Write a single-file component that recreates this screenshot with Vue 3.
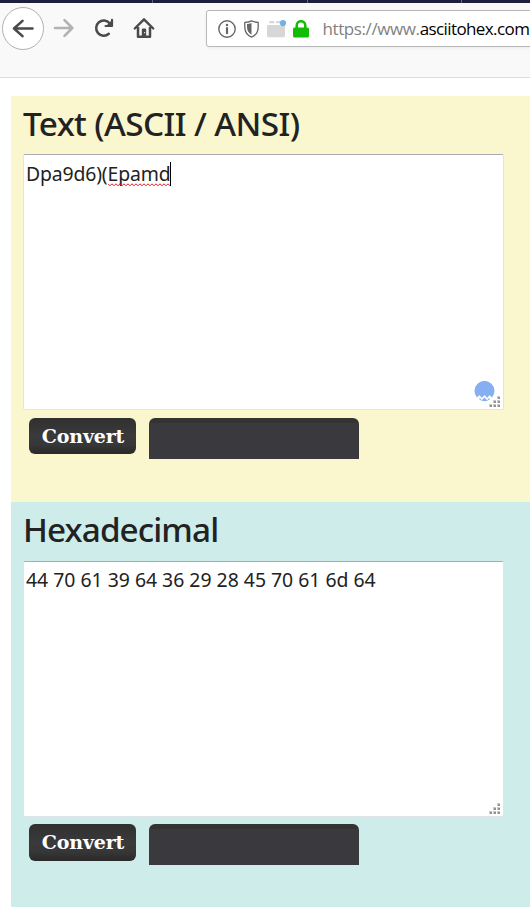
<script setup>
const panels = [
  { id: 'text', title: 'Text (ASCII / ANSI)', plain: 'Dpa9d6)(', marked: 'Epamd', caret: true },
  { id: 'hex', title: 'Hexadecimal', plain: '44 70 61 39 64 36 29 28 45 70 61 6d 64', marked: '', caret: false }
]
const tabs = [0, 1, 2, 3]
const dots = [[8, 0], [4, 4], [8, 4], [0, 8], [4, 8], [8, 8]]
</script>

<template>
  <div class="window">
    <div class="tabs"><i v-for="t in tabs" :key="t"></i></div>
    <header class="toolbar">
      <button class="back" aria-label="Back">
        <svg width="42" height="44" viewBox="0 0 42 44"><ellipse cx="21" cy="21.5" rx="20.5" ry="21" fill="#fff" stroke="#b1b1b1" /><path d="M30.500 21.500H12M20.500 13.900L12 21.500l8.500 7.600" fill="none" stroke="#4a4a4a" stroke-width="2.600" stroke-linecap="round" stroke-linejoin="round" /></svg>
      </button>
      <svg class="forward" width="22" height="20" viewBox="0 0 22 20"><path d="M2 10h17M11.500 2.200L19.300 10l-7.800 7.800" fill="none" stroke="#b2b2b2" stroke-width="2.600" stroke-linecap="round" stroke-linejoin="round" /></svg>
      <svg class="reload" width="21" height="20" viewBox="0 0 21 20"><path d="M14.800 15.800A7.600 7.600 0 1 1 15.600 5.200" fill="none" stroke="#4a4a4a" stroke-width="2.500" stroke-linecap="round" /><path d="M18 1.800V8h-6.400" fill="none" stroke="#4a4a4a" stroke-width="2.200" stroke-linecap="round" stroke-linejoin="round" /><path d="M18 2v6h-6z" fill="#4a4a4a" /></svg>
      <svg class="home" width="22" height="22" viewBox="0 0 22 22"><path d="M1.800 11.500L11 2.300l9.200 9.200" fill="none" stroke="#4a4a4a" stroke-width="2.400" stroke-linecap="round" stroke-linejoin="round" /><path d="M5 10v9.700h12V10" fill="none" stroke="#4a4a4a" stroke-width="2.500" stroke-linejoin="round" /><path d="M8.800 20v-7.300q0-1.200 1.200-1.200h2q1.200 0 1.200 1.200V20z" fill="#4a4a4a" /><circle cx="11.700" cy="15.700" r=".6" fill="#fff" /></svg>
      <div class="address">
        <svg class="info" width="18" height="18" viewBox="0 0 18 18"><circle cx="9" cy="9" r="8.200" fill="none" stroke="#666" stroke-width="1.400" /><circle cx="9" cy="5.100" r="1.250" fill="#666" /><path d="M9 8v5.200" stroke="#666" stroke-width="2.200" stroke-linecap="round" /></svg>
        <svg class="shield" width="15" height="18" viewBox="0 0 15 18"><path d="M.8 2.400Q4.500 2.200 7.500.8q3 1.400 6.700 1.600V7c0 4.800-2.400 8.300-6.700 10.200C3.200 15.300.8 11.800.8 7z" fill="#fff" stroke="#666" stroke-width="1.300" stroke-linejoin="round" /><path d="M3 4.100q2.200-.2 4.500-1.100v11.700C4.600 13 3 10.400 3 7z" fill="#666" /></svg>
        <svg class="folder" width="20" height="18" viewBox="0 0 20 18"><rect x="2" y="1" width="5.500" height="2.300" rx="1" fill="#d7d7d7" /><rect x="9" y="1" width="5" height="2.300" rx="1" fill="#d7d7d7" /><rect y="5" width="18" height="12.300" rx="1.200" fill="#d7d7d7" /><circle cx="16" cy="3.100" r="3.100" fill="#75b0e4" /></svg>
        <svg class="lock" width="16" height="18" viewBox="0 0 16 18"><path d="M3.700 9V5.500a4.300 4.300 0 0 1 8.600 0V9" fill="none" stroke="#12bc00" stroke-width="2.500" /><rect y="7.500" width="16" height="10" rx="1.500" fill="#12bc00" /></svg>
        <span class="url">https://www.<b>asciitohex.com</b></span>
      </div>
    </header>
    <main>
      <section v-for="p in panels" :key="p.id" class="panel" :class="p.id">
        <h2>{{ p.title }}</h2>
        <div class="field">
          <div class="value"><span>{{ p.plain }}</span><span v-if="p.marked" class="marked">{{ p.marked }}<svg class="squiggle" width="62" height="4" viewBox="0 0 62 4"><path d="M0 .8l2 2 2-2 2 2 2-2 2 2 2-2 2 2 2-2 2 2 2-2 2 2 2-2 2 2 2-2 2 2 2-2 2 2 2-2 2 2 2-2 2 2 2-2 2 2 2-2 2 2 2-2 2 2 2-2 2 2 2-2 2 2" fill="none" stroke="#e01b24" stroke-width="1" /></svg></span><i v-if="p.caret" class="caret"></i></div>
          <svg v-if="p.caret" class="badge" width="21" height="21" viewBox="0 0 21 21"><path d="M3 16.500A10 10 0 1 1 18 16.500l-2.500-2.500-2.300 3-2.700-3-2.700 3L5.500 14z" fill="#86aff2" /><path d="M5 18.200l1-1.200 1.800 2.200 2.700-2.800 2.700 2.800L15 17l1 1.200q-5.500 4.300-11 0z" fill="#86aff2" /></svg>
          <svg class="grip" width="12" height="12" viewBox="0 0 12 12"><g v-for="(d, n) in dots" :key="n"><rect :x="d[0]" :y="d[1]" width="3" height="3" fill="#c9c9c9" /><rect :x="d[0] + 1" :y="d[1] + 1" width="2" height="2" fill="#929292" /></g></svg>
        </div>
        <div class="actions">
          <button class="convert"><span>Convert</span></button>
          <div class="copy"></div>
        </div>
      </section>
    </main>
  </div>
</template>

<style>
body { margin: 0; background: #fff; overflow: hidden; }
</style>

<style scoped>
* { box-sizing: border-box; }
svg { display: block; flex: none; }
button { border: 0; padding: 0; }
.window { width: 530px; height: 907px; overflow: hidden; background: #fff; }
.tabs { height: 3px; background: #1e1f3d; display: flex; padding-left: 152px; gap: 153.500px; overflow: hidden; }
.tabs i { width: 1px; flex: none; background: #65667b; }
.toolbar { height: 75px; background: #f9f9f9; border-bottom: 1px solid #dcdcdc; display: flex; align-items: flex-start; padding: 4px 0 0 2px; overflow: hidden; }
.back { background: none; width: 42px; height: 44px; }
.forward { margin: 11px 0 0 9px; }
.reload { margin: 11px 0 0 19px; }
.home { margin: 10px 0 0 18px; }
.address { flex: none; width: 340px; height: 37px; margin: 3px 0 0 51px; background: #fff; border: 1px solid #b8b8b8; border-radius: 3px; box-shadow: 0 1px 3px rgba(0, 0, 0, .06); display: flex; align-items: center; padding-left: 11px; }
.shield { margin-left: 8px; }
.folder { margin-left: 8px; }
.lock { margin-left: 6px; }
.url { margin-left: 13.500px; font: 17px/24px "Open Sans", "Noto Sans", sans-serif; letter-spacing: -.4px; color: #818181; white-space: nowrap; }
.url b { font-weight: 400; letter-spacing: -.6px; color: #000; }
main { padding: 18px 0 0 11px; }
.panel { height: 406px; padding-left: 12px; display: flex; flex-direction: column; }
.panel.text { background: #faf6ce; }
.panel.hex { background: #ceecea; }
h2 { margin: 0; height: 58px; font: 500 33.300px/55px "Noto Sans", "Open Sans", sans-serif; letter-spacing: -.6px; color: #222; white-space: nowrap; flex: none; }
.hex h2 { height: 59px; letter-spacing: -.9px; }
.field { position: relative; flex: none; width: 481px; height: 256px; background: #fff; border: 1px solid #e1e5e9; border-top-color: #a9abb2; border-radius: 2px; padding: 5px 0 0 2px; }
.hex .field { padding-top: 4px; }
.value { display: flex; font: 19.400px/28px "Noto Sans", "Open Sans", sans-serif; color: #222; white-space: pre; }
.text .value { letter-spacing: -.15px; }
.marked { position: relative; }
.squiggle { position: absolute; left: 0; bottom: 1px; }
.caret { width: 1px; height: 24px; margin-top: 2px; background: #000; }
.badge { position: absolute; right: 8px; bottom: 7px; }
.grip { position: absolute; right: 2px; bottom: 1px; }
.actions { display: flex; align-items: flex-start; gap: 13px; padding: 8px 0 0 6px; }
.hex .actions { padding-top: 7px; }
.convert { width: 107px; height: 36px; border-radius: 6px; background: linear-gradient(#303030, #3a3a3a 50%, #373737 75%, #292929); color: #fff; font: 700 19px/36px "DejaVu Serif", serif; letter-spacing: -.15px; display: flex; justify-content: center; padding: 0 0 1px 1px; }
.hex .convert { height: 37px; padding-bottom: 2px; }
.copy { width: 210px; height: 41px; border-radius: 6px 6px 0 0; background: linear-gradient(#333 5px, #3a393d 5px); }
</style>
